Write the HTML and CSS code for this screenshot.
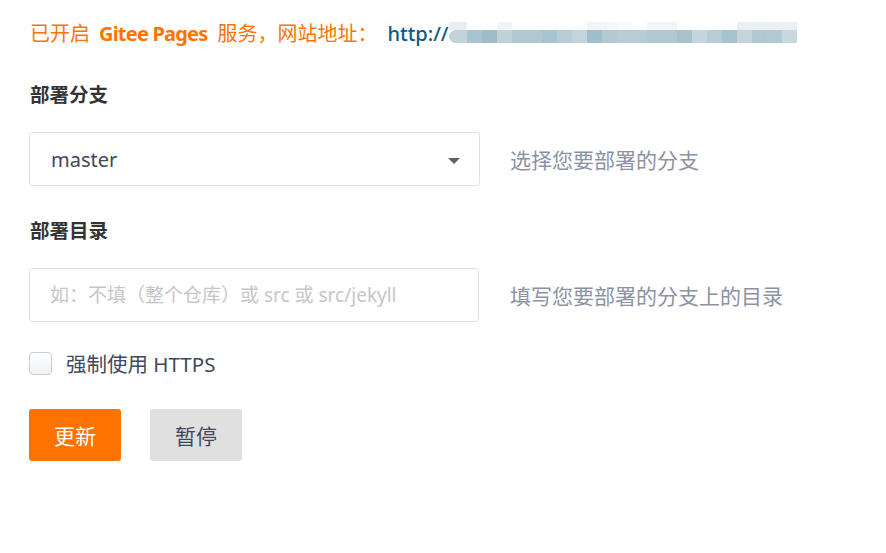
FILE: index.html
```html
<!DOCTYPE html>
<html lang="zh-CN">
<head>
<meta charset="utf-8">
<title>Gitee Pages</title>
<link rel="stylesheet" href="styles.css">
</head>
<body>
<div class="page">
  <div class="notice">
    <span class="notice-text">已开启<b>Gitee Pages</b>服务，网站地址：</span>
    <a class="notice-link" href="#">http://</a>
    <span class="mosaic" aria-hidden="true">
      <span class="mrow top">
        <i style="width:18px;background:#e8eef0"></i><i></i><i></i><i style="background:#f0f4f5"></i><i></i><i></i><i></i><i></i><i></i><i style="background:#f2f5f6"></i><i style="background:#f4f6f7"></i><i style="background:#f8f9fa"></i><i></i><i style="background:#f2f5f6"></i><i style="background:#f2f5f6"></i><i></i><i></i><i></i><i></i><i style="background:#eaf0f2"></i><i style="background:#eaf0f2"></i><i style="background:#eaf0f2"></i><i style="background:#eaf0f2"></i>
      </span>
      <span class="mrow main">
        <i style="width:18px;background:#c2d2d8;border-radius:7px 0 0 7px"></i><i style="background:#a8c4d0"></i><i style="background:#9fbcc8"></i><i style="background:#c0d2d8"></i><i style="background:#b0c8d2"></i><i style="background:#b0c8d2"></i><i style="background:#a8c4ce"></i><i style="background:#b8ccd4"></i><i style="background:#c4d4da"></i><i style="background:#a0bfcc"></i><i style="background:#b4cad2"></i><i style="background:#b8ccd4"></i><i style="background:#b8ccd4"></i><i style="background:#b0c8d2"></i><i style="background:#b0c8d2"></i><i style="background:#a8c2cc"></i><i style="background:#c4d6dc"></i><i style="background:#b8ccd4"></i><i style="background:#a4c2d0"></i><i style="background:#c4d4da"></i><i style="background:#b0c8d2"></i><i style="background:#b4cad2"></i><i style="background:#c8d8de"></i>
      </span>
    </span>
  </div>

  <div class="field first">
    <div class="label">部署分支</div>
    <div class="row">
      <div class="select">
        <span class="select-value">master</span>
        <span class="caret"></span>
      </div>
      <span class="hint">选择您要部署的分支</span>
    </div>
  </div>

  <div class="field second">
    <div class="label">部署目录</div>
    <div class="row">
      <input class="input" type="text" placeholder="如：不填（整个仓库）或 src 或 src/jekyll">
      <span class="hint">填写您要部署的分支上的目录</span>
    </div>
  </div>

  <label class="check">
    <span class="box"></span>
    <span class="check-label">强制使用 HTTPS</span>
  </label>

  <div class="actions">
    <button class="btn primary" type="button">更新</button>
    <button class="btn secondary" type="button">暂停</button>
  </div>
</div>
</body>
</html>
```

FILE: styles.css
```css
* { box-sizing: border-box; }

body {
  margin: 0;
  background: #fff;
  color: #40485b;
  font-family: "Noto Sans", "Noto Sans CJK SC", sans-serif;
}

.page {
  padding: 20px 29px;
}

.notice {
  display: flex;
  align-items: center;
  height: 28px;
  white-space: nowrap;
  font-size: 20px;
  line-height: 28px;
}

.notice-text {
  color: #fe7300;
  padding-left: 1px;
}

.notice-text b {
  font-weight: 700;
  letter-spacing: -0.8px;
  margin: 0 10px 0 9px;
}

.notice-link {
  margin-left: 10px;
  color: #0b5a85;
  text-decoration: none;
  font-weight: 500;
}

.mosaic {
  display: flex;
  flex-direction: column;
  margin-top: -4px;
}

.mrow {
  display: flex;
}

.mrow i {
  display: block;
  width: 15px;
  flex: none;
}

.mrow.top i { height: 8px; }
.mrow.main i { height: 13px; }

.field.first { margin-top: 33px; }
.field.second { margin-top: 31px; }

.label {
  font-size: 19.5px;
  line-height: 28px;
  font-weight: 700;
  color: #333;
  padding-left: 1px;
}

.row {
  display: flex;
  align-items: center;
  margin-top: 23px;
}

.select {
  width: 451px;
  height: 54px;
  border: 1px solid #dde2e8;
  border-radius: 3px;
  padding: 0 19px 0 21px;
  display: flex;
  align-items: center;
  justify-content: space-between;
  font-size: 20px;
  color: #40485b;
}

.caret {
  width: 0;
  height: 0;
  border-left: 6px solid transparent;
  border-right: 6px solid transparent;
  border-top: 6px solid #5c6274;
  margin-top: 3px;
}

.input {
  width: 450px;
  height: 54px;
  border: 1px solid #dde2e8;
  border-radius: 3px;
  padding: 0 20px;
  font-family: inherit;
  font-size: 19px;
  color: #40485b;
  outline: none;
}

.input::placeholder {
  color: #c4c6ca;
}

.hint {
  margin-left: 30px;
  font-size: 21px;
  color: #8c92a4;
}

.row .input + .hint {
  margin-left: 31px;
}

.check {
  display: flex;
  align-items: center;
  height: 28px;
  margin-top: 27px;
}

.box {
  width: 23px;
  height: 23px;
  border: 1px solid #c9cdd4;
  border-radius: 4px;
  background: linear-gradient(#ffffff, #eef0f3);
  margin-right: 14px;
}

.check-label {
  font-size: 20.5px;
  color: #40485b;
}

.actions {
  display: flex;
  gap: 29px;
  margin-top: 32px;
}

.btn {
  width: 92px;
  height: 52px;
  border: none;
  border-radius: 3px;
  font-family: inherit;
  font-size: 21px;
  padding: 0;
}

.btn.primary {
  background: #fe7300;
  color: #fff;
}

.btn.secondary {
  background: #e0e0e0;
  color: #40485b;
}
```
